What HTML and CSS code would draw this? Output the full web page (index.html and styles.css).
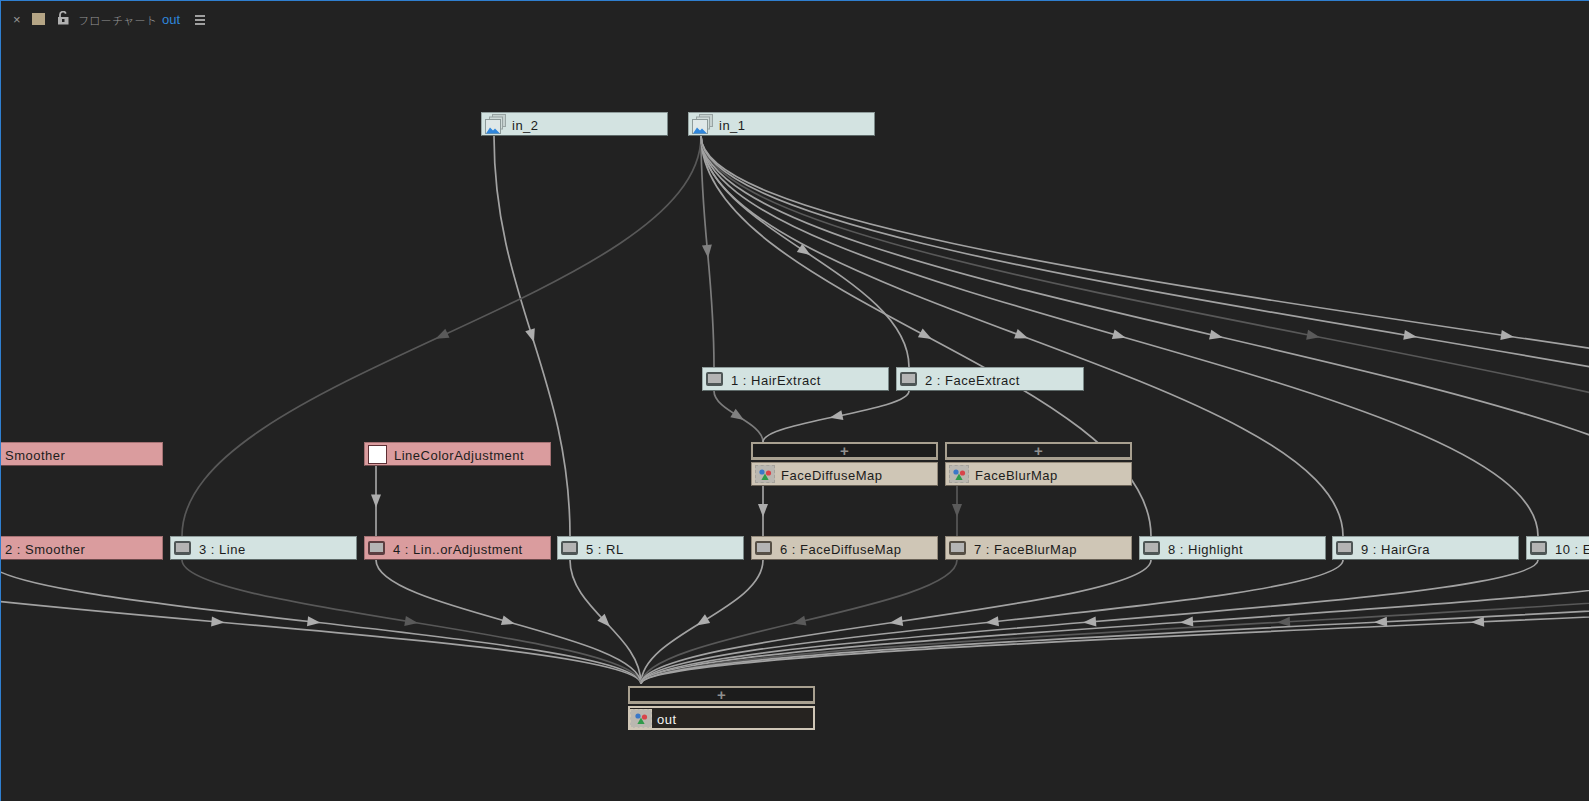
FILE: index.html
```html
<!DOCTYPE html>
<html lang="ja">
<head>
    <meta charset="UTF-8">
    <title>フローチャート out</title>
    <link rel="stylesheet" href="styles.css">
</head>
<body>
    <div class="panel">
        <header class="tab">
            <span class="tab-close">×</span>
            <span class="tab-swatch"></span>
            <svg class="tab-lock" width="12" height="14" viewBox="0 0 12 14">
                <path d="M3 6.5V3.6a3 3 0 0 1 5.8-1" fill="none" stroke="#b0b0b0" stroke-width="1.8"/>
                <rect x="1" y="6" width="10.5" height="7.5" fill="#b0b0b0"/>
                <rect x="5" y="8" width="2.5" height="3" fill="#222"/>
            </svg>
            <span class="tab-title">フローチャート</span>
            <span class="tab-comp">out</span>
            <span class="tab-menu"><i></i><i></i><i></i></span>
        </header>
        <div class="canvas" id="canvas">
            <svg class="wires" id="wires" width="1589" height="801"></svg>
        </div>
    </div>
    <script src="app.js"></script>
</body>
</html>
```

FILE: styles.css
```css
* {
    margin: 0;
    padding: 0;
    box-sizing: border-box;
}

html, body {
    height: 100%;
    overflow: hidden;
    background: #222222;
}

body {
    font-family: "Liberation Sans", Arial, sans-serif;
}

.panel {
    position: relative;
    height: 801px;
    border-top: 1px solid #2f7fd0;
    border-left: 1px solid #2f7fd0;
    overflow: hidden;
}

.tab {
    display: flex;
    align-items: center;
    height: 37px;
    padding-left: 12px;
    color: #999999;
    font-size: 13px;
}

.tab-close {
    width: 8px;
    margin-right: 11px;
    font-size: 13px;
    line-height: 1;
}

.tab-swatch {
    width: 13px;
    height: 12px;
    margin: -2px 12px 0 0;
    background: #b5a585;
}

.tab-lock {
    margin-right: 9px;
    margin-top: -3px;
}

.tab-title {
    font-family: "Noto Sans CJK JP", sans-serif;
    font-size: 11px;
    font-weight: 300;
    letter-spacing: 0.3px;
    margin-right: 5px;
}

.tab-comp {
    color: #2f86dc;
    font-size: 13px;
    margin-right: 15px;
}

.tab-menu {
    display: flex;
    flex-direction: column;
    gap: 2px;
    width: 10px;
}

.tab-menu i {
    display: block;
    height: 2px;
    background: #a0a0a0;
}

.canvas {
    position: absolute;
    top: -1px;
    left: -1px;
    width: 1589px;
    height: 801px;
}

.wires {
    position: absolute;
    top: 0;
    left: 0;
}

.wire {
    fill: none;
    stroke: #a2a2a2;
    stroke-width: 1.7;
}

.wire.mid {
    stroke: #7c7c7c;
}

.wire.off {
    stroke: #585858;
}

.arrow {
    fill: #adadad;
}

.arrow.mid {
    fill: #808080;
}

.arrow.off {
    fill: #5a5a5a;
}

.node {
    position: absolute;
    display: flex;
    align-items: center;
    width: 187px;
    height: 24px;
    padding-left: 3px;
    font-size: 13px;
    letter-spacing: 0.5px;
    color: #1c1c1c;
    white-space: nowrap;
    overflow: hidden;
    background: #d3e3e1;
    border: 1px solid #7b8a89;
    border-top-color: #8f9c9b;
    border-left-color: #9aa8a6;
    border-bottom-color: #5e6a69;
}

.node.adjust {
    background: #da9c9e;
    border-color: #a57274;
    border-bottom-color: #6c4a4c;
}

.node.precomp {
    background: #cfc6b6;
    border-color: #93897a;
    border-bottom-color: #6a6257;
}

.node.target {
    color: #f2f2f2;
    background: #262320;
    border: 2px solid #cfc6b6;
    padding-left: 0;
}

.node svg {
    flex: none;
}

.node-label {
    margin-left: 5px;
    padding-top: 3px;
}

.node.bare .node-label {
    margin-left: 1px;
}

.node.target .node-label {
    margin-left: 5px;
    padding-top: 2px;
}

.monitor {
    flex: none;
    width: 17px;
    height: 14px;
    margin: 0 3px 0 0;
    background: #b4b4b4;
    border: 2px solid #4e5656;
    border-bottom-width: 3px;
    border-radius: 2px;
}

.adjust .monitor {
    border-color: #5c3d40;
}

.precomp .monitor {
    border-color: #564f45;
}

.solid {
    flex: none;
    width: 19px;
    height: 19px;
    margin-right: 2px;
    background: #ffffff;
    border: 1px solid #5c2f34;
}

.comp-icon {
    flex: none;
    display: flex;
    align-items: center;
    justify-content: center;
    width: 20px;
    height: 18px;
    margin-right: 1px;
    background: #bab7b0;
    border: 1px dashed #a5a29b;
}

.target .comp-icon {
    width: 22px;
    height: 19px;
    margin-right: 0;
    border-color: #cfc6b6;
}

.plus-bar {
    position: absolute;
    display: flex;
    align-items: center;
    justify-content: center;
    width: 187px;
    height: 18px;
    background: #1c1c1c;
    border: 2px solid #a8a090;
    border-bottom-width: 3px;
    box-shadow: 0 2px 0 #222222;
    color: #8f8f8f;
    font: bold 15px "Liberation Sans", Arial, sans-serif;
}

.plus-bar.dim {
    background: #232323;
}
```

FILE: app.js
```js
// node lists: x, y, label, kind
const ROW_Y = 536;
const nodes = [
    { x: 481, y: 112, label: 'in_2', icon: 'footage' },
    { x: 688, y: 112, label: 'in_1', icon: 'footage' },
    { x: 702, y: 367, label: '1 : HairExtract', icon: 'monitor' },
    { x: 896, y: 367, w: 188, label: '2 : FaceExtract', icon: 'monitor' },
    { x: 0, y: 442, w: 163, label: 'Smoother', kind: 'adjust bare' },
    { x: 364, y: 442, label: 'LineColorAdjustment', kind: 'adjust', icon: 'solid' },
    { x: 751, y: 462, label: 'FaceDiffuseMap', kind: 'precomp', icon: 'comp' },
    { x: 945, y: 462, label: 'FaceBlurMap', kind: 'precomp', icon: 'comp' },
    { x: 0, y: ROW_Y, w: 163, label: '2 : Smoother', kind: 'adjust bare' },
    { x: 170, y: ROW_Y, label: '3 : Line', icon: 'monitor' },
    { x: 364, y: ROW_Y, label: '4 : Lin..orAdjustment', kind: 'adjust', icon: 'monitor' },
    { x: 557, y: ROW_Y, label: '5 : RL', icon: 'monitor' },
    { x: 751, y: ROW_Y, label: '6 : FaceDiffuseMap', kind: 'precomp', icon: 'monitor' },
    { x: 945, y: ROW_Y, label: '7 : FaceBlurMap', kind: 'precomp', icon: 'monitor' },
    { x: 1139, y: ROW_Y, label: '8 : Highlight', icon: 'monitor' },
    { x: 1332, y: ROW_Y, label: '9 : HairGra', icon: 'monitor' },
    { x: 1526, y: ROW_Y, label: '10 : E', icon: 'monitor' },
    { x: 628, y: 706, label: 'out', kind: 'target', icon: 'comp' }
];
const plusBars = [
    { x: 751, y: 442 },
    { x: 945, y: 442, dim: true },
    { x: 628, y: 686 }
];

const FOOTAGE = '<svg width="22" height="20" viewBox="0 0 22 20">' +
    '<rect x="7.5" y="0.5" width="13" height="12" fill="#c5d1cf" stroke="#98a4a3"/>' +
    '<rect x="4.5" y="3" width="13" height="12" fill="#cfdbd9" stroke="#98a4a3"/>' +
    '<rect x="0.5" y="5.5" width="15" height="14" fill="#dfe8e8" stroke="#8d9a99"/>' +
    '<path d="M1 19.5l4-6 3 3 2-2 5 5z" fill="#2f86dc"/></svg>';
const COMP = '<svg width="14" height="13" viewBox="0 0 14 13">' +
    '<circle cx="4" cy="4" r="2.6" fill="#3a78c8"/>' +
    '<circle cx="10.5" cy="5" r="2.6" fill="#d8454a"/>' +
    '<path d="M7 5.5l3.6 6.5H3.4z" fill="#2f9a4a"/></svg>';

const canvas = document.getElementById('canvas');

function iconHtml(icon) {
    if (icon === 'footage') return FOOTAGE;
    if (icon === 'monitor') return '<span class="monitor"></span>';
    if (icon === 'solid') return '<span class="solid"></span>';
    if (icon === 'comp') return '<span class="comp-icon">' + COMP + '</span>';
    return '';
}

nodes.forEach(n => {
    const el = document.createElement('div');
    el.className = 'node ' + (n.kind || '');
    if (n.w) el.style.width = n.w + 'px';
    el.style.left = n.x + 'px';
    el.style.top = n.y + 'px';
    el.innerHTML = iconHtml(n.icon) + '<span class="node-label">' + n.label + '</span>';
    canvas.appendChild(el);
});

plusBars.forEach(b => {
    const el = document.createElement('div');
    el.className = 'plus-bar' + (b.dim ? ' dim' : '');
    el.style.left = b.x + 'px';
    el.style.top = b.y + 'px';
    el.textContent = '+';
    canvas.appendChild(el);
});

// wires: vertical tangents at both ends, arrow at the middle of the curve
const SVG_NS = 'http://www.w3.org/2000/svg';
const wires = document.getElementById('wires');

function addWire(x0, y0, x1, y1, tone) {
    const k = (y1 - y0) * 0.4;
    const cls = tone ? ' ' + tone : '';
    const path = document.createElementNS(SVG_NS, 'path');
    path.setAttribute('class', 'wire' + cls);
    path.setAttribute('d', `M${x0} ${y0}C${x0} ${y0 + k} ${x1} ${y1 - k} ${x1} ${y1}`);
    wires.appendChild(path);

    // tangent at t = 0.5
    const angle = Math.atan2(y1 - y0 - k, x1 - x0) * 180 / Math.PI;
    const arrow = document.createElementNS(SVG_NS, 'path');
    arrow.setAttribute('class', 'arrow' + cls);
    arrow.setAttribute('d', 'M-6.5 -5L6.5 0L-6.5 5z');
    arrow.setAttribute('transform',
        `translate(${(x0 + x1) / 2} ${(y0 + y1) / 2}) rotate(${angle})`);
    wires.appendChild(arrow);
}

const IN_X = 701, IN_Y = 136;

addWire(494, IN_Y, 570, ROW_Y);
addWire(IN_X, IN_Y, 714, 367, 'mid');
addWire(IN_X, IN_Y, 909, 367);
addWire(IN_X, IN_Y, 182, ROW_Y, 'off');
[1151, 1343, 1538, 1732, 1926, 2120, 2314].forEach(x => {
    addWire(IN_X, IN_Y, x, ROW_Y, x === 1926 ? 'off' : '');
});

// precomp inputs and the straight drops
addWire(714, 391, 763, 442, 'mid');
addWire(909, 391, 763, 442);
addWire(376, 466, 376, ROW_Y);
addWire(763, 485, 763, ROW_Y);
addWire(957, 485, 957, ROW_Y, 'off');

// everything runs into the out layer
[-205, -13, 182, 376, 570, 763, 957, 1151, 1343, 1538, 1732, 1926, 2120, 2314].forEach(x => {
    addWire(x, 560, 641, 684, x === 182 || x === 957 || x === 1926 ? 'off' : '');
});
```
